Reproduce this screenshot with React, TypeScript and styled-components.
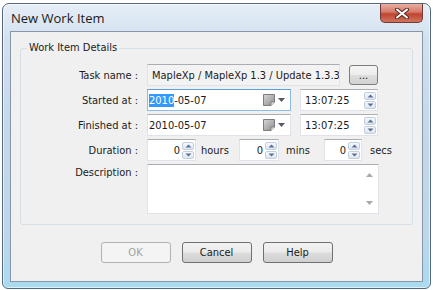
import styled, { createGlobalStyle } from "styled-components"

const uiFont = `"DejaVu Sans Condensed", "Liberation Sans", sans-serif`

const GlobalStyle = createGlobalStyle`
  html, body {
    margin: 0;
    background: #ffffff;
  }
  body {
    font-family: ${uiFont};
    font-size: 11px;
    color: #1b1b1b;
  }
`

function Spinner() {
  return (
    <SpinBox>
      <SpinHalf>
        <svg width="7" height="4" viewBox="0 0 7 4">
          <path d="M0.5 3.5 L3.5 0.5 L6.5 3.5 Z" fill="#5a6f93" />
        </svg>
      </SpinHalf>
      <SpinHalf>
        <svg width="7" height="4" viewBox="0 0 7 4">
          <path d="M0.5 0.5 L3.5 3.5 L6.5 0.5 Z" fill="#5a6f93" />
        </svg>
      </SpinHalf>
    </SpinBox>
  )
}

function CalendarDrop() {
  return (
    <DropPart>
      <svg width="12" height="12" viewBox="0 0 12 12">
        <defs>
          <linearGradient id="pg" x1="0" y1="0" x2="1" y2="1">
            <stop offset="0" stopColor="#d8d8d8" />
            <stop offset="1" stopColor="#8c8c8c" />
          </linearGradient>
        </defs>
        <path d="M0.5 0.5 H11.5 V8 L8 11.5 H0.5 Z" fill="url(#pg)" stroke="#7d7d7d" />
        <path d="M8 11.5 V8 H11.5" fill="#ececec" stroke="#7d7d7d" />
      </svg>
      <svg width="7" height="4" viewBox="0 0 7 4">
        <path d="M0 0 H7 L3.5 4 Z" fill="#555b66" />
      </svg>
    </DropPart>
  )
}

function DateTimeRow({ label, focused }: { label: string; focused?: boolean }) {
  return (
    <>
      <Label>{label}</Label>
      <FieldLine>
        <DateBox $focused={focused}>
          <DateText>
            {focused ? <Selected>2010</Selected> : "2010"}-05-07
          </DateText>
          <CalendarDrop />
        </DateBox>
        <TextBox $width={78}>
          <Value>13:07:25</Value>
          <Spinner />
        </TextBox>
      </FieldLine>
    </>
  )
}

function App() {
  return (
    <>
      <GlobalStyle />
      <Window>
        <TitleBar>
          <Title>New Work Item</Title>
          <CloseButton>
            <svg width="14" height="11" viewBox="0 0 14 11">
              <path
                d="M2 1.5 L12 9.5 M12 1.5 L2 9.5"
                stroke="#5a2a24"
                strokeWidth="4"
                strokeLinecap="round"
              />
              <path
                d="M2 1.5 L12 9.5 M12 1.5 L2 9.5"
                stroke="#ffffff"
                strokeWidth="2"
                strokeLinecap="round"
              />
            </svg>
          </CloseButton>
        </TitleBar>
        <Client>
          <GroupBox>
            <Legend>Work Item Details</Legend>
            <Form>
              <Label>Task name :</Label>
              <FieldLine>
                <TextBox $width={193} $readOnly>
                  <Value>MapleXp / MapleXp 1.3 / Update 1.3.3</Value>
                </TextBox>
                <SmallButton>...</SmallButton>
              </FieldLine>

              <DateTimeRow label="Started at :" focused />
              <DateTimeRow label="Finished at :" />

              <Label>Duration :</Label>
              <FieldLine $gap={0}>
                <TextBox $width={49}>
                  <Number>0</Number>
                  <Spinner />
                </TextBox>
                <Unit $width={43} $indent={5}>hours</Unit>
                <TextBox $width={40}>
                  <Number>0</Number>
                  <Spinner />
                </TextBox>
                <Unit $width={45} $indent={7}>mins</Unit>
                <TextBox $width={38}>
                  <Number>0</Number>
                  <Spinner />
                </TextBox>
                <Unit $width={34} $indent={8}>secs</Unit>
              </FieldLine>

              <Label $top>Description :</Label>
              <MemoBox>
                <MemoScroll>
                  <svg width="7" height="4" viewBox="0 0 7 4">
                    <path d="M0 4 L3.5 0 L7 4 Z" fill="#a9a9a9" />
                  </svg>
                  <svg width="7" height="4" viewBox="0 0 7 4">
                    <path d="M0 0 H7 L3.5 4 Z" fill="#a9a9a9" />
                  </svg>
                </MemoScroll>
              </MemoBox>
            </Form>
          </GroupBox>
          <ButtonRow>
            <DialogButton disabled>OK</DialogButton>
            <DialogButton>Cancel</DialogButton>
            <DialogButton>Help</DialogButton>
          </ButtonRow>
        </Client>
      </Window>
    </>
  )
}

const Window = styled.div`
  box-sizing: border-box;
  margin: 3px 0 0 2px;
  width: 429px;
  height: 286px;
  display: flex;
  flex-direction: column;
  padding: 0 7px 6px 7px;
  border: 1px solid #55687d;
  border-radius: 7px 7px 6px 6px;
  background: linear-gradient(
    180deg,
    #e6eef7 0%,
    #d3e1ef 12%,
    #c6d8ea 40%,
    #bdd6ea 80%,
    #a9dbef 100%
  );
  box-shadow: inset 0 0 0 1px rgba(255, 255, 255, 0.6);
`

const TitleBar = styled.div`
  height: 27px;
  display: flex;
  justify-content: space-between;
  align-items: flex-start;
`

const Title = styled.div`
  font-family: "Open Sans", "Noto Sans", sans-serif;
  font-size: 13px;
  color: #1a1a1a;
  padding: 5px 0 0 1px;
`

const CloseButton = styled.div`
  box-sizing: border-box;
  width: 43px;
  height: 19px;
  display: flex;
  align-items: center;
  justify-content: center;
  border: 1px solid #6f3a33;
  border-top: none;
  border-radius: 0 0 5px 5px;
  background: linear-gradient(180deg, #e7b0a4 0%, #d5796a 45%, #c0442f 55%, #d0755e 100%);
`

const Client = styled.div`
  flex: 1;
  display: flex;
  flex-direction: column;
  border: 1px solid #8796a8;
  background: #f0f0f0;
  padding: 16px 9px 0 9px;
`

const GroupBox = styled.div`
  position: relative;
  box-sizing: border-box;
  height: 177px;
  border: 1px solid #d5dfe5;
  border-radius: 3px;
  padding: 15px 0 0 0;
`

const Legend = styled.span`
  position: absolute;
  top: -8px;
  left: 6px;
  padding: 0 2px;
  background: #f0f0f0;
  line-height: 14px;
`

const Form = styled.div`
  display: grid;
  grid-template-columns: 117px 1fr;
  grid-auto-rows: 22px;
  column-gap: 9px;
  row-gap: 3px;

  & > :last-child {
    grid-row: span 2;
    height: 50px;
  }
`

const Label = styled.div<{ $top?: boolean }>`
  display: flex;
  justify-content: flex-end;
  align-items: ${({ $top }) => ($top ? "flex-start" : "center")};
  padding-top: ${({ $top }) => ($top ? "2px" : "0")};
  white-space: nowrap;
`

const FieldLine = styled.div<{ $gap?: number }>`
  display: flex;
  align-items: center;
  gap: ${({ $gap }) => ($gap ?? 9)}px;
`

const TextBox = styled.div<{ $width: number; $readOnly?: boolean }>`
  box-sizing: border-box;
  width: ${({ $width }) => $width}px;
  height: 22px;
  display: flex;
  align-items: center;
  padding: 0 1px 0 4px;
  border: 1px solid #e2e3ea;
  border-top-color: #abadb3;
  background: ${({ $readOnly }) => ($readOnly ? "#f3f3f3" : "#ffffff")};
  white-space: nowrap;
  overflow: hidden;
`

const Value = styled.span`
  flex: 1;
`

const Number = styled.span`
  flex: 1;
  text-align: right;
  padding-right: 2px;
`

const DateBox = styled.div<{ $focused?: boolean }>`
  box-sizing: border-box;
  width: 144px;
  height: 22px;
  display: flex;
  align-items: center;
  padding: 0 5px 0 1px;
  border: 1px solid ${({ $focused }) => ($focused ? "#8ebce8" : "#e2e3ea")};
  border-top-color: ${({ $focused }) => ($focused ? "#5d9fdc" : "#abadb3")};
  background: #ffffff;
`

const DateText = styled.span`
  flex: 1;
`

const Selected = styled.span`
  background: #3399ff;
  color: #ffffff;
`

const DropPart = styled.div`
  display: flex;
  align-items: center;
  gap: 3px;
`

const SpinBox = styled.div`
  display: flex;
  flex-direction: column;
  gap: 1px;
  width: 12px;
`

const SpinHalf = styled.div`
  box-sizing: border-box;
  height: 8px;
  display: flex;
  align-items: center;
  justify-content: center;
  border: 1px solid #c2cedb;
  border-radius: 2px;
  background: linear-gradient(180deg, #f4f8fc, #dce6f1);
`

const Unit = styled.span<{ $width: number; $indent: number }>`
  box-sizing: border-box;
  width: ${({ $width }) => $width}px;
  padding-left: ${({ $indent }) => $indent}px;
  white-space: nowrap;
`

const SmallButton = styled.div`
  box-sizing: border-box;
  width: 29px;
  height: 20px;
  display: flex;
  align-items: flex-end;
  justify-content: center;
  padding-bottom: 4px;
  border: 1px solid #7d7d7d;
  border-radius: 3px;
  background: linear-gradient(180deg, #f4f4f4 0%, #ececec 50%, #dedede 51%, #d2d2d2 100%);
  line-height: 8px;
`

const MemoBox = styled.div`
  box-sizing: border-box;
  width: 232px;
  display: flex;
  justify-content: flex-end;
  border: 1px solid #e2e3ea;
  border-top-color: #abadb3;
  background: #ffffff;
`

const MemoScroll = styled.div`
  width: 17px;
  display: flex;
  flex-direction: column;
  justify-content: space-between;
  align-items: center;
  padding: 8px 0 8px 0;
`

const ButtonRow = styled.div`
  display: flex;
  justify-content: center;
  gap: 11px;
  margin-top: 17px;
`

const DialogButton = styled.button`
  box-sizing: border-box;
  width: 70px;
  height: 21px;
  padding: 0;
  font-family: ${uiFont};
  font-size: 11px;
  color: #1b1b1b;
  border: 1px solid #707070;
  border-radius: 3px;
  background: linear-gradient(180deg, #f2f2f2 0%, #ebebeb 48%, #dddddd 52%, #cfcfcf 100%);

  &:disabled {
    color: #a0a0a0;
    border-color: #adb2b5;
    background: #f4f4f4;
  }
`

export default App
